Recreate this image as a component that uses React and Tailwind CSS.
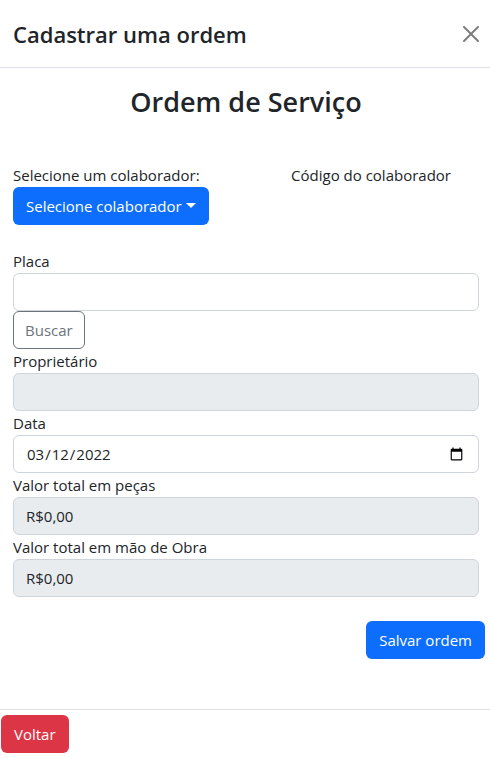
import { useState } from "react";

const fieldBase =
  "block h-[38px] w-full rounded-md border border-[#ced4da] px-3 text-[15px] leading-6 text-[#212529]";

function Field({ id, label, children }) {
  return (
    <div>
      <label htmlFor={id} className="block h-6 leading-6">
        {label}
      </label>
      {children}
    </div>
  );
}

export default function App() {
  const [date, setDate] = useState("2022-03-12");
  const [plate, setPlate] = useState("");

  return (
    <div
      role="dialog"
      aria-labelledby="dialog-title"
      className="min-h-screen bg-white font-['Open_Sans','Noto_Sans',sans-serif] text-[15px] leading-6 text-[#212529]"
    >
      <header className="flex h-[68px] items-center justify-between border-b border-[#dee2e6] pr-[11px] pl-[13px]">
        <h1 id="dialog-title" className="text-[22px] leading-8 font-semibold">
          Cadastrar uma ordem
        </h1>
        <button type="button" aria-label="Fechar" className="text-black opacity-50">
          <svg viewBox="0 0 16 16" fill="currentColor" className="size-4">
            <path d="M.293.293a1 1 0 0 1 1.414 0L8 6.586 14.293.293a1 1 0 1 1 1.414 1.414L9.414 8l6.293 6.293a1 1 0 0 1-1.414 1.414L8 9.414l-6.293 6.293a1 1 0 0 1-1.414-1.414L6.586 8 .293 1.707a1 1 0 0 1 0-1.414z" />
          </svg>
        </button>
      </header>

      <main className="pt-4 pr-[11px] pb-[50px] pl-[13px]">
        <h2 className="text-center text-[27px] leading-9 font-semibold">Ordem de Serviço</h2>

        <div className="mt-[43px] flex items-start justify-between pr-7">
          <div>
            <p>Selecione um colaborador:</p>
            <button
              type="button"
              aria-haspopup="menu"
              className="flex h-[38px] items-center gap-1 rounded-md bg-[#0d6efd] px-[13px] text-white"
            >
              Selecione colaborador
              <span className="mb-0.5 border-x-[5px] border-t-[5px] border-x-transparent" />
            </button>
          </div>
          <p>Código do colaborador</p>
        </div>

        <form className="mt-6">
          <Field id="plate" label="Placa">
            <input
              id="plate"
              type="text"
              value={plate}
              onChange={(e) => setPlate(e.target.value)}
              className={`${fieldBase} bg-white`}
            />
          </Field>
          <button
            type="button"
            className="block h-[38px] rounded-md border border-[#6c757d] px-[11px] text-[#6c757d]"
          >
            Buscar
          </button>
          <Field id="owner" label="Proprietário">
            <input id="owner" type="text" readOnly className={`${fieldBase} bg-[#e9ecef]`} />
          </Field>
          <Field id="date" label="Data">
            <input
              id="date"
              type="date"
              value={date}
              onChange={(e) => setDate(e.target.value)}
              className={`${fieldBase} bg-white`}
            />
          </Field>
          <Field id="parts" label="Valor total em peças">
            <input
              id="parts"
              type="text"
              readOnly
              value="R$0,00"
              className={`${fieldBase} bg-[#e9ecef]`}
            />
          </Field>
          <Field id="labor" label="Valor total em mão de Obra">
            <input
              id="labor"
              type="text"
              readOnly
              value="R$0,00"
              className={`${fieldBase} bg-[#e9ecef]`}
            />
          </Field>
          <div className="-mr-1.5 mt-6 flex justify-end">
            <button type="submit" className="h-[38px] rounded-md bg-[#0d6efd] px-[13px] text-white">
              Salvar ordem
            </button>
          </div>
        </form>
      </main>

      <footer className="border-t border-[#dee2e6] px-px py-[5px]">
        <button type="button" className="h-[38px] rounded-md bg-[#dc3545] px-[13px] text-white">
          Voltar
        </button>
      </footer>
    </div>
  );
}
